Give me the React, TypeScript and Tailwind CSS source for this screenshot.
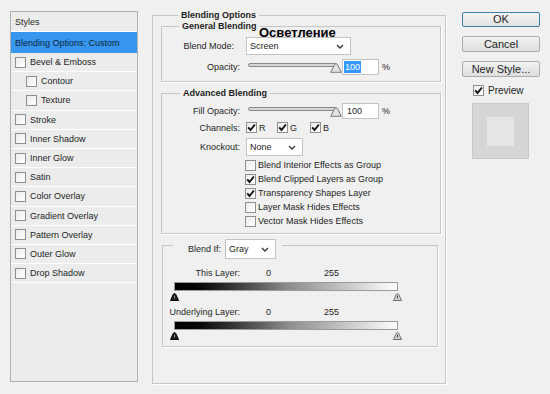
import React from 'react';

const listItems: { label: string; indent?: boolean }[] = [
  { label: 'Bevel & Emboss' },
  { label: 'Contour', indent: true },
  { label: 'Texture', indent: true },
  { label: 'Stroke' },
  { label: 'Inner Shadow' },
  { label: 'Inner Glow' },
  { label: 'Satin' },
  { label: 'Color Overlay' },
  { label: 'Gradient Overlay' },
  { label: 'Pattern Overlay' },
  { label: 'Outer Glow' },
  { label: 'Drop Shadow' },
];

const advancedChecks = [
  { label: 'Blend Interior Effects as Group', checked: false },
  { label: 'Blend Clipped Layers as Group', checked: true },
  { label: 'Transparency Shapes Layer', checked: true },
  { label: 'Layer Mask Hides Effects', checked: false },
  { label: 'Vector Mask Hides Effects', checked: false },
];

const Check = ({ checked = false }: { checked?: boolean }) => (
  <span className="flex h-[11px] w-[11px] shrink-0 items-center justify-center border border-[#8f8f8f] bg-gradient-to-br from-[#ececec] to-white">
    {checked && (
      <svg width="9" height="9" viewBox="0 0 9 9">
        <path d="M1.2 4.4 L3.5 7 L7.9 1.5" fill="none" stroke="#111" strokeWidth="1.9" />
      </svg>
    )}
  </span>
);

const Chevron = () => (
  <svg width="8" height="5" viewBox="0 0 8 5">
    <path d="M1 1 L4 4 L7 1" fill="none" stroke="#3a3a3a" strokeWidth="1.4" />
  </svg>
);

const Select = ({ value, className }: { value: string; className: string }) => (
  <div className={`flex items-center justify-between border border-[#c3c3c3] bg-white pl-[3px] pr-[6px] ${className}`}>
    <span>{value}</span>
    <Chevron />
  </div>
);

// slider with the thumb sitting at the right end of the groove
const Slider = () => (
  <div className="relative h-[16px] w-[96px] shrink-0">
    <div className="ml-[2px] mt-[4px] h-[4px] w-[89px] rounded-full border border-[#8a8a8a] bg-[#d6d6d6]" />
    <svg className="absolute left-[84px] top-[4px]" width="12" height="10" viewBox="0 0 12 10">
      <path d="M6 0.6 Q6.9 0.6 7.6 1.9 L11.3 9.3 H0.7 L4.4 1.9 Q5.1 0.6 6 0.6 Z" fill="#e2e2e2" stroke="#7b7b7b" />
    </svg>
  </div>
);

const Knob = ({ dark = false }: { dark?: boolean }) => (
  <svg width="9" height="8" viewBox="0 0 9 8">
    <path
      d="M4.5 0.5 Q5.2 0.5 5.8 1.6 L8.5 7.5 H0.5 L3.2 1.6 Q3.8 0.5 4.5 0.5 Z"
      fill={dark ? '#1c1c1c' : '#d2d2d2'}
      stroke={dark ? '#000' : '#6f6f6f'}
    />
    <path d="M4.5 2.6 V5.4" stroke={dark ? '#9a9a9a' : '#444'} strokeWidth="1" />
  </svg>
);

const GradientBar = () => (
  <div className="ml-[11px] mt-[3px]">
    <div className="h-[9px] w-[224px] border border-[#9b9b9b] bg-gradient-to-r from-black via-[#8a8a8a] to-white" />
    <div className="-ml-[4px] mt-[2px] flex w-[232px] justify-between">
      <Knob dark />
      <Knob />
    </div>
  </div>
);

const groupBox = 'border border-[#c6c6c6] shadow-[1px_1px_0_#fff]';

export default function App() {
  return (
    <div className="relative flex h-[394px] w-[550px] items-start overflow-hidden bg-[#f0f0f0] font-['Liberation_Sans',Arial,sans-serif] text-[9px] leading-[12px] text-[#1e1e1e]">
      {/* Styles list */}
      <div className="ml-[10px] mt-[11px] h-[371px] w-[128px] shrink-0 border border-[#b0b0b0] bg-[#ececec]">
        <div className="flex h-[20px] items-center border-b border-white pl-[4px]">Styles</div>
        <div className="flex h-[21px] items-center bg-[#3797ee] pl-[4px] text-[#0d1f3c]">Blending Options: Custom</div>
        {listItems.map((it) => (
          <div
            key={it.label}
            className={`flex h-[19.2px] items-center gap-[4px] border-b border-white ${it.indent ? 'pl-[15px]' : 'pl-[4px]'}`}
          >
            <Check />
            <span>{it.label}</span>
          </div>
        ))}
      </div>

      {/* Blending Options */}
      <fieldset className={`ml-[14px] mt-[9px] h-[375px] w-[294px] shrink-0 pl-[8px] ${groupBox}`}>
        <legend className="ml-[17px] px-[3px] font-bold">Blending Options</legend>

        <fieldset className={`-mt-[1px] w-[280px] pb-[6px] ${groupBox}`}>
          <legend className="ml-[17px] px-[3px] font-bold">General Blending</legend>
          <div className="mt-[5px] flex h-[18px] items-center">
            <span className="w-[78px] pr-[6px] text-right">Blend Mode:</span>
            <Select value="Screen" className="ml-[6px] h-[18px] w-[105px]" />
          </div>
          <div className="mt-[4px] flex h-[16px] items-center">
            <span className="w-[78px] text-right">Opacity:</span>
            <div className="ml-[6px] flex items-center">
              <Slider />
              <div className="flex h-[16px] w-[37px] items-center border border-[#c3c3c3] bg-white pl-[1px]">
                <span className="bg-[#3399ff] px-[1px] text-white">100</span>
              </div>
              <span className="ml-[3px]">%</span>
            </div>
          </div>
        </fieldset>

        <fieldset className={`mt-[5px] w-[280px] pb-[5px] ${groupBox}`}>
          <legend className="ml-[18px] px-[3px] font-bold">Advanced Blending</legend>
          <div className="mt-[4px] flex h-[16px] items-center">
            <span className="w-[78px] text-right">Fill Opacity:</span>
            <div className="ml-[6px] flex items-center">
              <Slider />
              <div className="flex h-[16px] w-[37px] items-center border border-[#c3c3c3] bg-white pl-[4px]">100</div>
              <span className="ml-[3px]">%</span>
            </div>
          </div>
          <div className="mt-[2px] flex h-[13px] items-center">
            <span className="w-[78px] text-right">Channels:</span>
            <div className="ml-[6px] flex items-center">
              <div className="flex w-[31px] items-center gap-[2px]"><Check checked /><span>R</span></div>
              <div className="flex w-[33px] items-center gap-[2px]"><Check checked /><span>G</span></div>
              <div className="flex items-center gap-[2px]"><Check checked /><span>B</span></div>
            </div>
          </div>
          <div className="mt-[4px] flex h-[18px] items-center">
            <span className="w-[78px] text-right">Knockout:</span>
            <Select value="None" className="ml-[6px] h-[18px] w-[57px]" />
          </div>
          <div className="ml-[83px] mt-[2px] flex flex-col">
            {advancedChecks.map((c) => (
              <div key={c.label} className="flex h-[14px] items-center gap-[2px]">
                <Check checked={c.checked} />
                <span>{c.label}</span>
              </div>
            ))}
          </div>
        </fieldset>

        <fieldset className={`ml-[1px] mt-[5px] w-[276px] pb-[6px] ${groupBox}`}>
          <legend className="ml-[10px] h-[12px] pl-[15px] pr-[6px]">
            <div className="flex h-[20px] items-center gap-[4px]">
              <span>Blend If:</span>
              <Select value="Gray" className="h-[20px] w-[51px]" />
            </div>
          </legend>
          <div className="mt-[16px] flex h-[12px] items-center">
            <span className="w-[77px] text-right">This Layer:</span>
            <span className="ml-[26px] w-[58px]">0</span>
            <span>255</span>
          </div>
          <GradientBar />
          <div className="mt-[5px] flex h-[12px] items-center">
            <span className="w-[77px] text-right">Underlying Layer:</span>
            <span className="ml-[26px] w-[58px]">0</span>
            <span>255</span>
          </div>
          <GradientBar />
        </fieldset>
      </fieldset>

      {/* Buttons + preview */}
      <div className="ml-[16px] flex w-[78px] shrink-0 flex-col text-[11px] leading-[13px]">
        <button className="mt-[12px] h-[15px] rounded-[2px] border border-[#3c7fb1] bg-gradient-to-b from-[#f4f4f4] to-[#e3e3e3]">OK</button>
        <button className="mt-[9px] h-[16px] rounded-[2px] border border-[#acacac] bg-gradient-to-b from-[#f2f2f2] to-[#dedede]">Cancel</button>
        <button className="mt-[9px] h-[16px] rounded-[2px] border border-[#acacac] bg-gradient-to-b from-[#f2f2f2] to-[#dedede]">New Style...</button>
        <div className="ml-[11px] mt-[8px] flex h-[11px] items-center gap-[4px] text-[10px]">
          <Check checked />
          <span>Preview</span>
        </div>
        <div className="ml-[10px] mt-[7px] flex h-[56px] w-[57px] items-center justify-center border border-[#c8c8c8] bg-[#d6d6d6]">
          <div className="h-[29px] w-[27px] bg-[#e6e6e6]" />
        </div>
      </div>

      {/* annotation written over the dialog */}
      <span className="absolute left-[259px] top-[26px] text-[13px] font-bold leading-[13px] text-black">Осветление</span>
    </div>
  );
}
